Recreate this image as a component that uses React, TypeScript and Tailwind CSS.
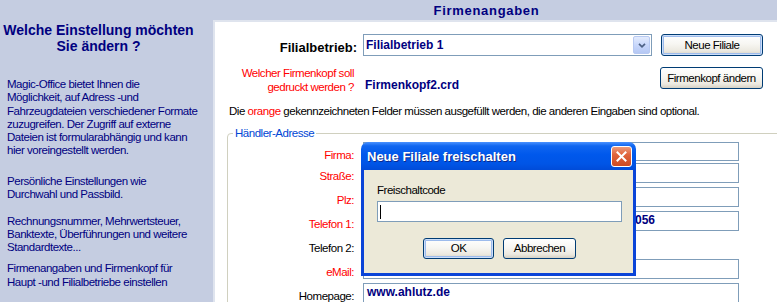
import React from "react";

const xpBtn =
  "flex items-center justify-center rounded-[3px] border border-[#003c74] bg-[linear-gradient(180deg,#ffffff_0%,#f7f6f2_45%,#ece9e0_80%,#d6d1c4_100%)] text-black whitespace-nowrap";
const xpFocus = "shadow-[inset_0_0_0_1px_#cddff9,inset_0_0_0_2px_#9dbbec]";

function Field({
  label,
  red,
  first,
  width = "w-[376px]",
  children,
}: {
  label: string;
  red?: boolean;
  first?: boolean;
  width?: string;
  children?: React.ReactNode;
}) {
  return (
    <div className={`flex items-center ${first ? "h-[19px] mt-[2px] mb-[2px]" : "h-[20px] mb-[4px]"}`}>
      <div className={`w-[126px] text-right pt-[8px] whitespace-nowrap ${red ? "text-[#ff0000]" : "text-black"}`}>
        {label}
      </div>
      <div className={`ml-[9px] ${width} h-full border border-[#7f9db9] bg-white flex items-center overflow-hidden`}>
        {children}
      </div>
    </div>
  );
}

export default function App() {
  return (
    <div className="relative w-[777px] h-[302px] overflow-hidden bg-[#c5cde1] flex font-['Liberation_Sans',Arial,sans-serif] text-[11.5px] leading-[13px] tracking-[-0.47px]">
      {/* Left column */}
      <aside className="w-[213px] shrink-0 text-[#000080]">
        <h1 className="w-[197px] mt-[22px] text-center font-bold text-[14px] leading-[16px] tracking-normal whitespace-nowrap">
          Welche Einstellung möchten
          <br />
          Sie ändern ?
        </h1>
        <p className="pl-[7px] mt-[24px] leading-[13.3px] whitespace-nowrap">
          Magic-Office bietet Ihnen die
          <br />
          Möglichkeit, auf Adress -und
          <br />
          Fahrzeugdateien verschiedener Formate
          <br />
          zuzugreifen. Der Zugriff auf externe
          <br />
          Dateien ist formularabhängig und kann
          <br />
          hier voreingestellt werden.
        </p>
        <p className="pl-[7px] mt-[17px] leading-[13.3px] whitespace-nowrap">
          Persönliche Einstellungen wie
          <br />
          Durchwahl und Passbild.
        </p>
        <p className="pl-[7px] mt-[13.5px] leading-[13.3px] whitespace-nowrap">
          Rechnungsnummer, Mehrwertsteuer,
          <br />
          Banktexte, Überführungen und weitere
          <br />
          Standardtexte...
        </p>
        <p className="pl-[7px] mt-[7.5px] leading-[13.3px] whitespace-nowrap">
          Firmenangaben und Firmenkopf für
          <br />
          Haupt -und Filialbetriebe einstellen
        </p>
      </aside>

      {/* Main column */}
      <main className="flex-1 min-w-0 flex flex-col">
        <div className="h-[20px] shrink-0 flex items-center justify-center pr-[17px] font-bold text-[13px] tracking-[0.7px] text-[#000080]">
          Firmenangaben
        </div>
        <div className="flex-1 bg-white border-l-2 border-t-2 border-[#dfe4ee]">
          {/* Row 1 */}
          <div className="flex items-center h-[22px] mt-[12px]">
            <div className="w-[142px] text-right pt-[5px] font-bold text-[13px] tracking-normal text-black">
              Filialbetrieb:
            </div>
            <div className="ml-[6px] w-[289px] h-[22px] border border-[#7f9db9] bg-white flex items-center">
              <span className="flex-1 pl-[2px] font-bold text-[12px] tracking-normal text-[#000080]">
                Filialbetrieb 1
              </span>
              <div className="w-[17px] h-[18px] mr-[1px] rounded-[2px] border border-[#b7c9f2] bg-[linear-gradient(180deg,#e3ebfd_0%,#c8d7fb_50%,#b5c8f4_100%)] flex items-center justify-center">
                <svg width="8" height="5" viewBox="0 0 8 5">
                  <path d="M1 0.8 L4 3.8 L7 0.8" stroke="#4d6185" strokeWidth="1.7" fill="none" />
                </svg>
              </div>
            </div>
            <button className={`${xpBtn} ${xpFocus} ml-[9px] w-[102px] h-[22px]`}>Neue Filiale</button>
          </div>

          {/* Row 2 */}
          <div className="flex items-start mt-[10px] h-[28px]">
            <div className="w-[139px] text-right text-[#ff0000] leading-[14px] whitespace-nowrap">
              Welcher Firmenkopf soll
              <br />
              gedruckt werden ?
            </div>
            <div className="ml-[9px] w-[289px] pl-[2px] mt-[12.5px] font-bold text-[12px] tracking-normal text-[#000080]">
              Firmenkopf2.crd
            </div>
            <button className={`${xpBtn} ml-[8px] mt-[1px] w-[103px] h-[22px]`}>Firmenkopf ändern</button>
          </div>

          {/* Hint */}
          <div className="mt-[10.5px] pl-[14px] whitespace-nowrap text-black">
            Die <span className="text-[#ff0000]">orange</span> gekennzeichneten Felder müssen ausgefüllt werden,
            die anderen Eingaben sind optional.
          </div>

          {/* Group box */}
          <fieldset className="mt-[9px] ml-[12px] w-[600px] h-[200px] border border-[#d0d0bf] rounded-[4px]">
            <legend className="ml-[5px] px-[2px] text-[#0046d5]">Händler-Adresse</legend>
            <Field label="Firma:" red first />
            <Field label="Straße:" red />
            <Field label="Plz:" red />
            <Field label="Telefon 1:" red>
              <span className="pl-[271px] font-bold text-[12px] tracking-normal text-[#000080]">056</span>
            </Field>
            <Field label="Telefon 2:" width="w-[200px]" />
            <Field label="eMail:" red />
            <Field label="Homepage:">
              <span className="pl-[3px] font-bold text-[12px] tracking-normal text-[#000080]">www.ahlutz.de</span>
            </Field>
          </fieldset>
        </div>
      </main>

      {/* Dialog */}
      <div className="absolute left-[361px] top-[142px] w-[275px] h-[134px] flex flex-col">
        <div className="relative h-[28px] shrink-0 rounded-t-[7px] bg-[linear-gradient(180deg,#4a92ff_0%,#1066f0_14%,#0058ec_45%,#0055e6_78%,#004bd8_100%)] flex items-center pl-[6px]">
          <span className="font-bold text-[13px] tracking-normal text-white [text-shadow:1px_1px_0_#0c2a8c]">
            Neue Filiale freischalten
          </span>
          <div className="absolute top-[4px] right-[4px] w-[21px] h-[21px] rounded-[3px] border border-white bg-[linear-gradient(180deg,#ec9b7c_0%,#e0643c_40%,#cc4a22_100%)] flex items-center justify-center">
            <svg width="11" height="11" viewBox="0 0 11 11">
              <path d="M1.5 1.5 L9.5 9.5 M9.5 1.5 L1.5 9.5" stroke="white" strokeWidth="2" strokeLinecap="square" />
            </svg>
          </div>
        </div>
        <div className="flex-1 border-x-[3px] border-b-[3px] border-[#0a44d8] bg-[#ece9d8] pl-[13px] pt-[14px]">
          <div className="text-black">Freischaltcode</div>
          <div className="mt-[4px] w-[245px] h-[21px] border border-[#7f9db9] bg-white flex items-center pl-[2px]">
            <div className="w-px h-[14px] bg-black" />
          </div>
          <div className="mt-[16px] ml-[46px] flex gap-[9px]">
            <button className={`${xpBtn} ${xpFocus} w-[71px] h-[21px]`}>OK</button>
            <button className={`${xpBtn} w-[73px] h-[21px]`}>Abbrechen</button>
          </div>
        </div>
      </div>
    </div>
  );
}
